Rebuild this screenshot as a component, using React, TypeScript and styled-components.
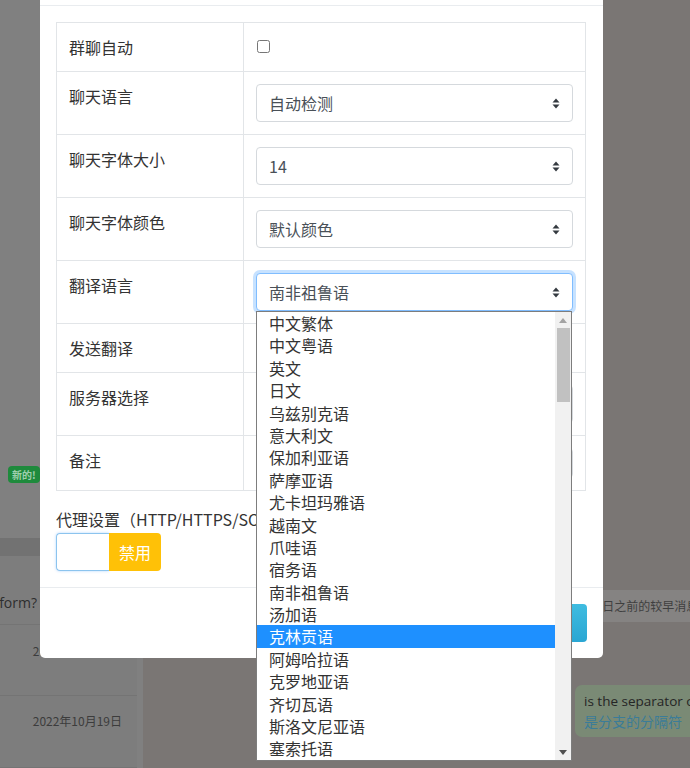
import React from "react";
import styled, { createGlobalStyle } from "styled-components";

const GlobalStyle = createGlobalStyle`
  html, body { margin: 0; padding: 0; width: 690px; height: 768px; overflow: hidden; }
  body { font-family: "Noto Sans CJK SC", "Noto Sans", sans-serif; }
  * { box-sizing: border-box; }
`;

const Page = styled.div`
  position: relative;
  width: 690px;
  height: 768px;
  display: flex;
  overflow: hidden;
  background: #7a7674;
`;

/* ---------- background chat app (dimmed) ---------- */
const Sidebar = styled.aside`
  width: 143px;
  flex: none;
  display: flex;
  flex-direction: column;
  background: #808080;
`;
const BadgeArea = styled.div`
  height: 540px;
  padding: 460px 0 0 8px;
`;
const Badge = styled.span`
  display: inline-block;
  height: 17px;
  padding: 0 4px;
  border-radius: 4px;
  background: #1e8a3c;
  color: #9fcfae;
  font-size: 10px;
  line-height: 17px;
  font-weight: 700;
`;
const Band = styled.div`
  height: 18px;
  background: #727272;
`;
const ChatRow = styled.div<{ $h: number; $pt: number }>`
  height: ${(p) => p.$h}px;
  padding-top: ${(p) => p.$pt}px;
  margin-right: 6px;
  border-bottom: 1px solid #747474;
  display: flex;
  flex-direction: column;
  background: #7d7d7d;
`;
const Snippet = styled.div`
  width: 37px;
  overflow: hidden;
  display: flex;
  justify-content: flex-end;
  white-space: nowrap;
  font-size: 14px;
  line-height: 18px;
  color: #2e2e2e;
  font-family: "Open Sans", "Noto Sans", sans-serif;
`;
const DateText = styled.div`
  align-self: flex-end;
  padding-right: 15px;
  font-size: 12px;
  line-height: 18px;
  color: #3c3c3c;
  white-space: nowrap;
`;
const Main = styled.main`
  flex: 1;
  display: flex;
  flex-direction: column;
  padding-top: 590px;
  background: #7a7674;
`;
const Notice = styled.div`
  align-self: flex-start;
  margin-left: 374px;
  height: 32px;
  padding: 0 8px;
  border-radius: 6px;
  background: #858382;
  color: #3f3f3f;
  font-size: 12px;
  line-height: 32px;
  white-space: nowrap;
`;
const Bubble = styled.div`
  align-self: flex-start;
  margin: 63px 0 0 432px;
  padding: 6px 9px;
  border-radius: 7px;
  background: #7a8a75;
  white-space: nowrap;
`;
const BubbleText = styled.div<{ $cn?: boolean }>`
  font-family: ${(p) => (p.$cn ? '"Noto Sans CJK SC", sans-serif' : '"Open Sans", "Noto Sans", sans-serif')};
  font-size: ${(p) => (p.$cn ? 14 : 13.5)}px;
  line-height: 20px;
  color: ${(p) => (p.$cn ? "#3b7c98" : "#252525")};
`;

/* ---------- modal ---------- */
const Overlay = styled.div`
  position: absolute;
  inset: 0;
`;
const Modal = styled.div`
  position: absolute;
  left: 40px;
  top: -51px;
  width: 563px;
  background: #fff;
  border-radius: 5px;
  color: #333;
`;
const ModalHeader = styled.div`
  height: 57px;
  padding: 16px;
  border-bottom: 1px solid #e9ecef;
  font-size: 20px;
  line-height: 24px;
`;
const ModalBody = styled.div`
  padding: 16px;
`;
const Table = styled.table`
  width: 530px;
  border-collapse: collapse;
  table-layout: fixed;
  margin-bottom: 16px;
`;
const Cell = styled.td<{ $w?: number }>`
  ${(p) => (p.$w ? `width: ${p.$w}px;` : "")}
  border: 1px solid #e2e5e8;
  padding: 12px;
  vertical-align: top;
  font-size: 16px;
  line-height: 24px;
  color: #333;
`;
const Check = styled.input`
  margin: 5px 3px 3px 1px;
  width: 13px;
  height: 13px;
  vertical-align: top;
`;
const SelectWrap = styled.div`
  position: relative;
`;
const SelectBox = styled.div<{ $focus?: boolean }>`
  height: 38px;
  display: flex;
  align-items: center;
  justify-content: space-between;
  padding: 0 12px;
  border: 1px solid ${(p) => (p.$focus ? "#80bdff" : "#d5d9dd")};
  border-radius: 4px;
  box-shadow: ${(p) => (p.$focus ? "0 0 0 3px rgba(0,123,255,0.22)" : "none")};
  font-size: 16px;
  line-height: 24px;
  color: #495057;
  background: #fff;
`;
const SmallInput = styled.div`
  height: 30px;
  border: 1px solid #d5d9dd;
  border-radius: 4px;
`;
const Arrows = () => (
  <svg width="8" height="11" viewBox="0 0 8 11">
    <path d="M4 0.5 L7.5 4.5 H0.5 Z M0.5 6.5 H7.5 L4 10.5 Z" fill="#343a40" />
  </svg>
);

const ProxyLabel = styled.div`
  font-size: 16px;
  line-height: 24px;
  color: #333;
  white-space: nowrap;
  margin-bottom: 2px;
`;
const InputGroup = styled.div`
  display: flex;
  height: 38px;
`;
const ProxyInput = styled.div`
  width: 53px;
  border: 1px solid #8cc4ee;
  border-right: none;
  border-radius: 4px 0 0 4px;
  box-shadow: 0 0 3px rgba(0, 123, 255, 0.3);
`;
const WarnButton = styled.button`
  width: 52px;
  border: none;
  border-radius: 0 4px 4px 0;
  background: #ffc107;
  color: #fff;
  font-family: inherit;
  font-size: 16px;
  padding: 0;
`;
const ModalFooter = styled.div`
  border-top: 1px solid #e9ecef;
  padding: 16px;
  display: flex;
  justify-content: flex-end;
`;
const InfoButton = styled.button`
  height: 38px;
  padding: 0 20px;
  border: none;
  border-radius: 4px;
  background: linear-gradient(#3fbce0, #2aa6d3);
  color: #fff;
  font-family: inherit;
  font-size: 16px;
`;

/* ---------- open dropdown list ---------- */
const ListBox = styled.div`
  position: absolute;
  top: 100%;
  left: 0;
  width: 316px;
  height: 450px;
  border: 1px solid #7d7d7d;
  background: #fff;
  display: flex;
  z-index: 5;
`;
const Options = styled.ul`
  flex: 1;
  margin: 0;
  padding: 0;
  list-style: none;
`;
const Option = styled.li<{ $active?: boolean }>`
  height: 22.4px;
  padding-left: 12px;
  font-size: 16px;
  line-height: 22.4px;
  white-space: nowrap;
  color: ${(p) => (p.$active ? "#fff" : "#333")};
  background: ${(p) => (p.$active ? "#1e90ff" : "transparent")};
`;
const ScrollBar = styled.div`
  width: 16px;
  background: #f1f1f1;
  display: flex;
  flex-direction: column;
`;
const ScrollArrow = styled.div`
  height: 16px;
  display: flex;
  align-items: center;
  justify-content: center;
`;
const Track = styled.div`
  flex: 1;
  display: flex;
  justify-content: center;
`;
const Thumb = styled.div`
  width: 13px;
  height: 74px;
  background: #c1c1c1;
`;

const languages = [
  "中文繁体", "中文粤语", "英文", "日文", "乌兹别克语", "意大利文", "保加利亚语",
  "萨摩亚语", "尤卡坦玛雅语", "越南文", "爪哇语", "宿务语", "南非祖鲁语", "汤加语",
  "克林贡语", "阿姆哈拉语", "克罗地亚语", "齐切瓦语", "斯洛文尼亚语", "塞索托语",
];

const Select = ({ value, focus, children }: { value: string; focus?: boolean; children?: React.ReactNode }) => (
  <SelectWrap>
    <SelectBox $focus={focus}>
      <span>{value}</span>
      <Arrows />
    </SelectBox>
    {children}
  </SelectWrap>
);

export default function App() {
  return (
    <Page>
      <GlobalStyle />
      <Sidebar>
        <BadgeArea>
          <Badge>新的!</Badge>
        </BadgeArea>
        <Band />
        <ChatRow $h={70} $pt={38}>
          <Snippet>on this platform?</Snippet>
        </ChatRow>
        <ChatRow $h={73} $pt={17}>
          <DateText>2022年10月20日</DateText>
        </ChatRow>
        <ChatRow $h={73} $pt={16}>
          <DateText>2022年10月19日</DateText>
        </ChatRow>
      </Sidebar>
      <Main>
        <Notice>2022年10月19日之前的较早消息</Notice>
        <Bubble>
          <BubbleText>is the separator of branches</BubbleText>
          <BubbleText $cn>是分支的分隔符</BubbleText>
        </Bubble>
      </Main>

      <Overlay>
        <Modal>
          <ModalHeader>设置</ModalHeader>
          <ModalBody>
            <Table>
              <tbody>
                <tr>
                  <Cell $w={187}>群聊自动</Cell>
                  <Cell><Check type="checkbox" /></Cell>
                </tr>
                <tr>
                  <Cell>聊天语言</Cell>
                  <Cell><Select value="自动检测" /></Cell>
                </tr>
                <tr>
                  <Cell>聊天字体大小</Cell>
                  <Cell><Select value="14" /></Cell>
                </tr>
                <tr>
                  <Cell>聊天字体颜色</Cell>
                  <Cell><Select value="默认颜色" /></Cell>
                </tr>
                <tr>
                  <Cell>翻译语言</Cell>
                  <Cell>
                    <Select value="南非祖鲁语" focus>
                      <ListBox>
                        <Options>
                          {languages.map((l) => (
                            <Option key={l} $active={l === "克林贡语"}>{l}</Option>
                          ))}
                        </Options>
                        <ScrollBar>
                          <ScrollArrow>
                            <svg width="8" height="5" viewBox="0 0 8 5"><path d="M4 0 L8 5 H0 Z" fill="#a3a3a3" /></svg>
                          </ScrollArrow>
                          <Track><Thumb /></Track>
                          <ScrollArrow>
                            <svg width="8" height="5" viewBox="0 0 8 5"><path d="M0 0 H8 L4 5 Z" fill="#505050" /></svg>
                          </ScrollArrow>
                        </ScrollBar>
                      </ListBox>
                    </Select>
                  </Cell>
                </tr>
                <tr>
                  <Cell>发送翻译</Cell>
                  <Cell><Check type="checkbox" /></Cell>
                </tr>
                <tr>
                  <Cell>服务器选择</Cell>
                  <Cell><Select value="默认服务器" /></Cell>
                </tr>
                <tr>
                  <Cell>备注</Cell>
                  <Cell><SmallInput /></Cell>
                </tr>
              </tbody>
            </Table>
            <ProxyLabel>代理设置（HTTP/HTTPS/SOCKS5）</ProxyLabel>
            <InputGroup>
              <ProxyInput />
              <WarnButton>禁用</WarnButton>
            </InputGroup>
          </ModalBody>
          <ModalFooter>
            <InfoButton>保存</InfoButton>
          </ModalFooter>
        </Modal>
      </Overlay>
    </Page>
  );
}
